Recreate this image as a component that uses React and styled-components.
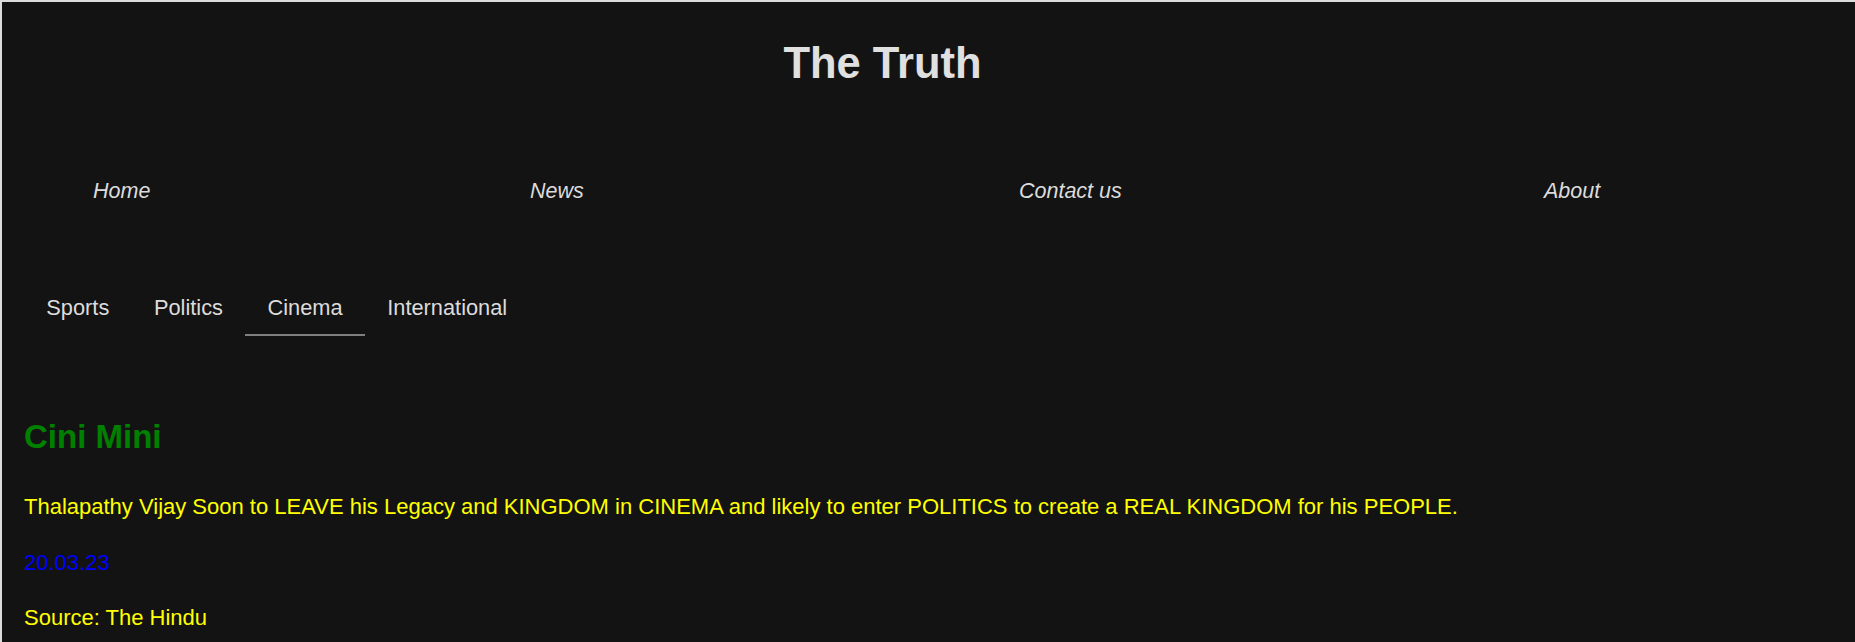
import React from 'react';
import styled, {createGlobalStyle} from 'styled-components';

const GlobalStyle = createGlobalStyle`
  html, body {
    margin: 0;
  }
  body {
    padding: 2px 0 0 2px;
    background-color: #dcdcdc;
    font-family: "Liberation Sans", Arial, sans-serif;
  }
`;

const Page = styled.div`
  min-height: calc(100vh - 2px);
  background-color: #131313;
  color: #dcdcdc;
  overflow: hidden;
`;

const Header = styled.header`
  padding: 36px 92px 0 0;
  text-align: center;
`;

const Title = styled.h1`
  margin: 0;
  font-size: 43.5px;
  line-height: 50px;
  font-weight: bold;
  color: #e0e0e0;
`;

const Nav = styled.nav`
  margin-top: 91px;
  padding-left: 91px;
  display: grid;
  grid-template-columns: 437px 489px 525px 1fr;
`;

const NavLink = styled.a`
  font-size: 21.5px;
  line-height: 25px;
  font-style: italic;
  color: #dcdcdc;
  text-decoration: none;
`;

const Tabs = styled.div`
  margin-top: 78px;
  padding-left: 22px;
  display: flex;
`;

const Tab = styled.div`
  padding: 13px 22.3px 14px;
  font-size: 21.8px;
  line-height: 25px;
  color: #dcdcdc;
  border-bottom: 2px solid ${p => (p.$active ? '#808080' : 'transparent')};
`;

const Article = styled.article`
  padding: 0 22px;
`;

const Heading = styled.h2`
  margin: 82px 0 38px;
  font-size: 33px;
  line-height: 38px;
  font-weight: bold;
  color: #008000;
`;

const Line = styled.p`
  margin: 0 0 30.5px;
  font-size: 22px;
  line-height: 25px;
  color: ${p => p.$color || '#ffff00'};
`;

const navItems = ['Home', 'News', 'Contact us', 'About'];
const tabs = ['Sports', 'Politics', 'Cinema', 'International'];

export default function App() {
  return <Page>
    <GlobalStyle />
    <Header>
      <Title>The Truth</Title>
    </Header>
    <Nav>
      {navItems.map(item => <NavLink key={item} href="#">{item}</NavLink>)}
    </Nav>
    <Tabs>
      {tabs.map(t => <Tab key={t} $active={t === 'Cinema'}>{t}</Tab>)}
    </Tabs>
    <Article>
      <Heading>Cini Mini</Heading>
      <Line>Thalapathy Vijay Soon to LEAVE his Legacy and KINGDOM in CINEMA and likely to enter POLITICS to create a REAL KINGDOM for his PEOPLE.</Line>
      <Line $color="#0000ff">20.03.23</Line>
      <Line>Source: The Hindu</Line>
    </Article>
  </Page>;
}
